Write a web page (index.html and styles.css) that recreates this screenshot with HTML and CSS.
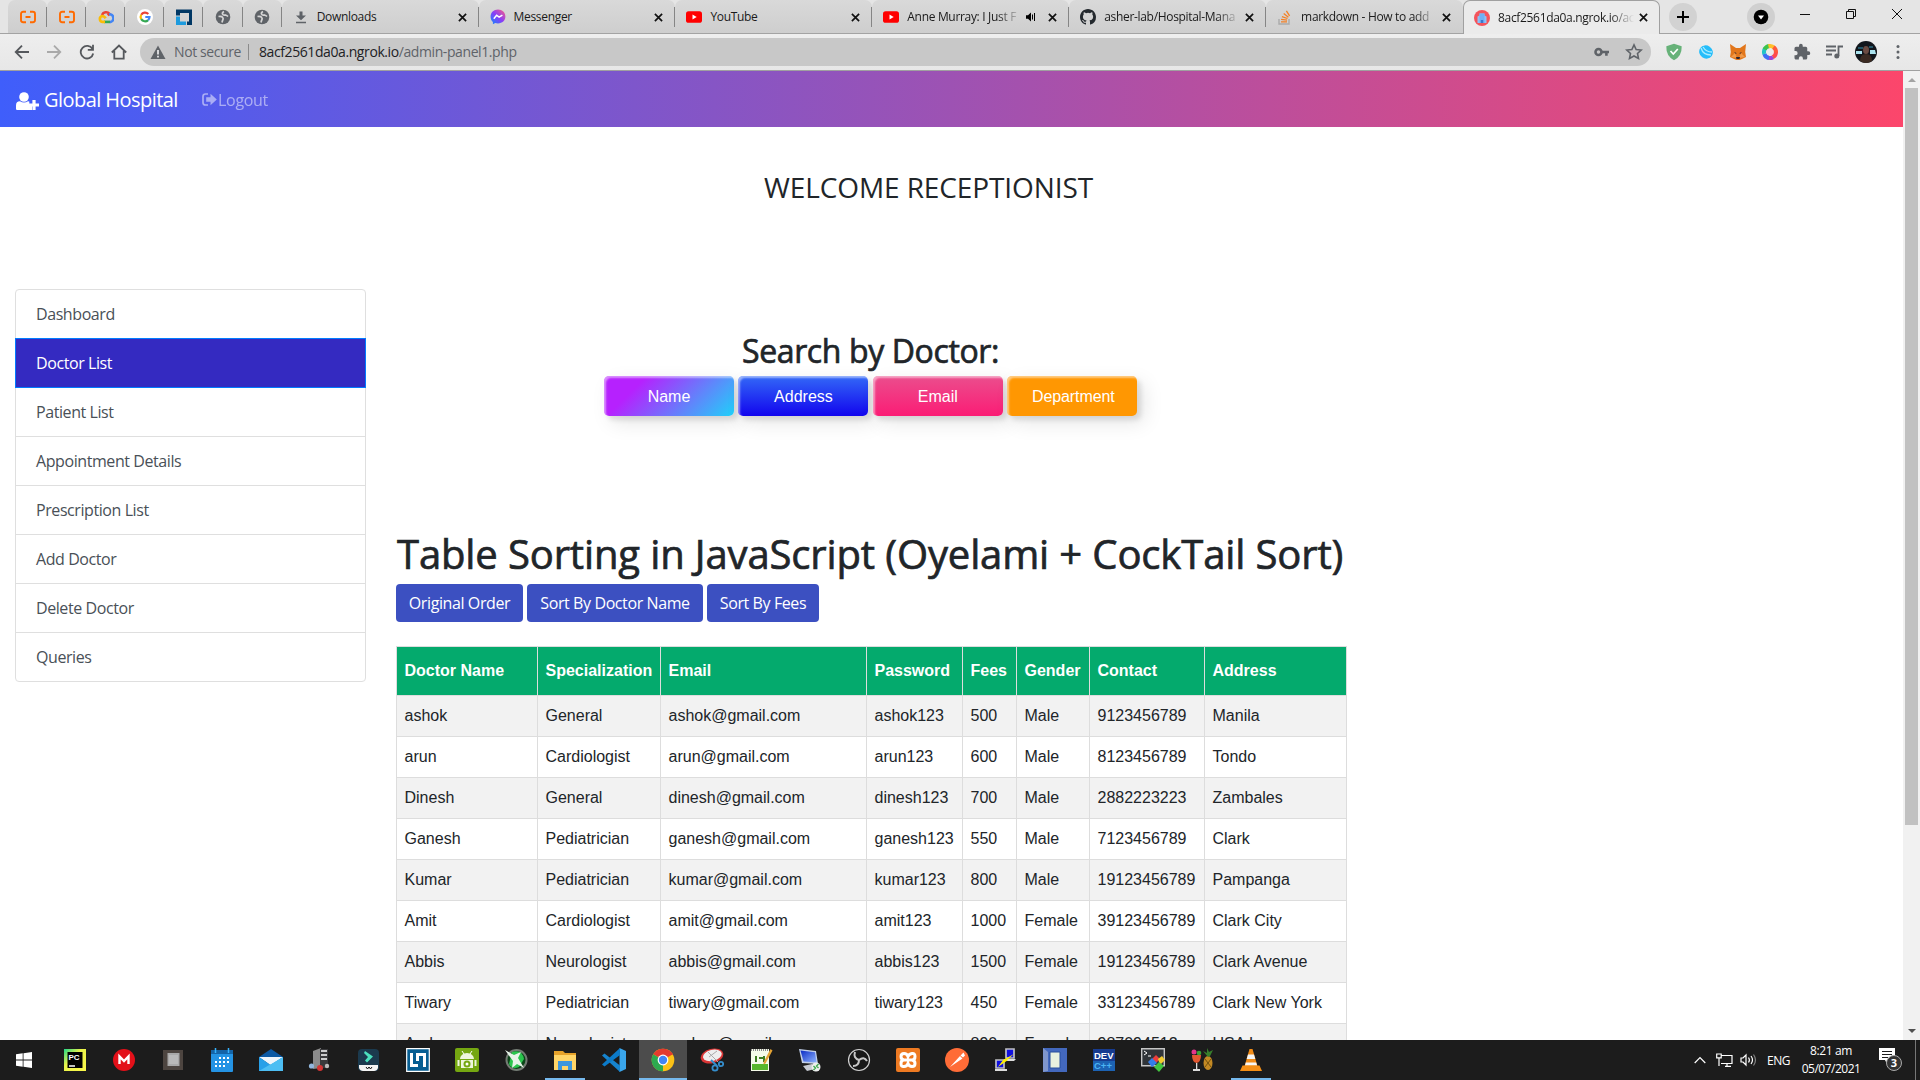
FILE: index.html
```html
<!DOCTYPE html>
<html lang="en">
<head>
<meta charset="utf-8">
<title>Global Hospital</title>
<link rel="stylesheet" href="styles.css">
</head>
<body>
<svg class="defs" aria-hidden="true">
  <defs>
    <linearGradient id="msg" x1="0" y1="1" x2="1" y2="0"><stop offset="0" stop-color="#0a8cff"/><stop offset=".5" stop-color="#8a3df7"/><stop offset="1" stop-color="#ff5f80"/></linearGradient>
    <linearGradient id="pyc" x1="0" y1="0" x2="1" y2="1"><stop offset="0" stop-color="#1fd789"/><stop offset=".4" stop-color="#e9f34a"/><stop offset="1" stop-color="#fcf84a"/></linearGradient>
    <linearGradient id="scr" x1="0" y1="0" x2="1" y2="1"><stop offset="0" stop-color="#0a2bc4"/><stop offset="1" stop-color="#8fb4ff"/></linearGradient>
  </defs>
  <symbol id="x" viewBox="0 0 10 10"><path d="M1 1l8 8M9 1L1 9" stroke="#111" stroke-width="1.9" fill="none"/></symbol>
  <symbol id="bracket" viewBox="0 0 16 16"><path d="M6 2.8H3.2Q1 2.8 1 5v6q0 2.200 2.200 2.200H6M10 2.800h2.800Q15 2.800 15 5v6q0 2.200-2.200 2.200H10M5.500 8h5" fill="none" stroke="#ff6a00" stroke-width="1.900"/></symbol>
  <symbol id="globe" viewBox="0 0 16 16"><circle cx="8" cy="8" r="7.300" fill="#5f6368"/><path d="M9 2.500q-2 1-1.500 2.500t3 1q1.500.5 2.500 1.500M3.500 7.500q3-.5 4 .8t.5 2.200-1 3" fill="none" stroke="#d5d5d5" stroke-width="1.700"/></symbol>
  <symbol id="youtube" viewBox="0 0 16 16"><rect y="2.300" width="16" height="11.500" rx="2.600" fill="#f00"/><path d="M6.500 5.600v4.900L10.700 8z" fill="#fff"/></symbol>
</svg>

<header class="browser">
  <div class="tabs">
    <div class="tab pin"><svg class="i16"><use href="#bracket"/></svg></div>
    <div class="tab pin"><svg class="i16"><use href="#bracket"/></svg></div>
    <div class="tab pin"><svg class="i16" viewBox="0 0 16 16"><path d="M4 6a4.500 4.500 0 0 1 7.500-1.200L9.800 6.400" fill="none" stroke="#ea4335" stroke-width="2.600"/><path d="M11 5.200a4 4 0 0 1 .8 8" fill="none" stroke="#4285f4" stroke-width="2.600"/><path d="M12 12.900H6" stroke="#34a853" stroke-width="2.600"/><path d="M7 12.900H4.300A3 3 0 0 1 4.300 7q2 0 3.400 2.200" fill="none" stroke="#fbbc05" stroke-width="2.600"/></svg></div>
    <div class="tab pin"><svg class="i16" viewBox="0 0 16 16"><circle cx="8" cy="8" r="8" fill="#fff"/><path d="M4.200 5.800A4.500 4.500 0 0 1 11.300 5" fill="none" stroke="#ea4335" stroke-width="2.200"/><path d="M4.200 5.800a4.500 4.500 0 0 0 0 4.400" fill="none" stroke="#fbbc05" stroke-width="2.200"/><path d="M4.200 10.200a4.500 4.500 0 0 0 6.900.9" fill="none" stroke="#34a853" stroke-width="2.200"/><path d="M11.100 11.100A4.500 4.500 0 0 0 12.500 8H8.300" fill="none" stroke="#4285f4" stroke-width="2.200"/></svg></div>
    <div class="tab pin"><svg class="i16" viewBox="0 0 16 16"><path d="M0 .5h16V16h-5v-3.500h2V4H4v2.500H0z" fill="#003764"/><path d="M0 7.500h4v5h6V16H0z" fill="#1d9bde"/></svg></div>
    <div class="tab pin"><svg class="i16"><use href="#globe"/></svg></div>
    <div class="tab pin"><svg class="i16"><use href="#globe"/></svg></div>
    <div class="tab"><svg class="i16" viewBox="0 0 16 16"><path d="M6.500 2.500h3v4H13L8 11.300 3 6.500h3.500zM3 12.800h10v1.500H3z" fill="#5f6368"/></svg><span class="label">Downloads</span><svg class="close"><use href="#x"/></svg></div>
    <div class="tab"><svg class="i16" viewBox="0 0 16 16"><path d="M8 .6C3.700.6.600 3.700.600 7.700c0 2.100.9 4 2.300 5.200v2.300l2.300-1.100c.9.200 1.800.4 2.800.4 4.300 0 7.400-3 7.400-6.900S12.300.6 8 .6z" fill="url(#msg)"/><path d="M3.800 9.700l2.800-3.500 2.500 2 3.300-2.100" fill="none" stroke="#fff" stroke-width="1.500"/></svg><span class="label">Messenger</span><svg class="close"><use href="#x"/></svg></div>
    <div class="tab"><svg class="i16"><use href="#youtube"/></svg><span class="label">YouTube</span><svg class="close"><use href="#x"/></svg></div>
    <div class="tab"><svg class="i16"><use href="#youtube"/></svg><span class="label fade">Anne Murray: I Just F</span><svg class="sound" viewBox="0 0 10 10"><path d="M0 3.300h2L5 .5v9L2 6.700H0z"/><path d="M6.500 2.500v5M8.500 1v8" stroke="#000" stroke-width="1"/></svg><svg class="close"><use href="#x"/></svg></div>
    <div class="tab"><svg class="i16" viewBox="0 0 16 16"><path fill="#24292e" d="M8 0C3.580 0 0 3.580 0 8c0 3.540 2.290 6.530 5.470 7.590.4.070.55-.17.55-.38 0-.19-.01-.82-.01-1.490-2.010.37-2.530-.49-2.690-.94-.09-.23-.48-.94-.82-1.130-.28-.15-.68-.52-.01-.53.63-.01 1.080.58 1.230.82.72 1.210 1.870.87 2.330.66.07-.52.28-.87.51-1.070-1.780-.2-3.640-.89-3.640-3.950 0-.87.310-1.590.82-2.150-.08-.2-.36-1.020.08-2.120 0 0 .67-.21 2.200.82a7.600 7.600 0 0 1 4 0c1.530-1.040 2.200-.82 2.200-.82.44 1.100.16 1.920.08 2.120.51.56.82 1.270.82 2.150 0 3.070-1.870 3.750-3.650 3.950.29.25.54.73.54 1.480 0 1.070-.01 1.930-.01 2.200 0 .21.15.46.55.38A8 8 0 0 0 16 8c0-4.420-3.580-8-8-8z"/></svg><span class="label fade">asher-lab/Hospital-Mana</span><svg class="close"><use href="#x"/></svg></div>
    <div class="tab last"><svg class="i16" viewBox="0 0 16 16"><path d="M2 10v5h10v-5" fill="none" stroke="#aaa" stroke-width="1.400"/><path d="M4 12.800h6M4.100 10.400l6 .7M4.900 7.600l5.600 1.900M6.700 4.600l4.700 3.700M9.400 1.800l3.200 5" stroke="#f48024" stroke-width="1.300"/></svg><span class="label fade">markdown - How to add</span><svg class="close"><use href="#x"/></svg></div>
    <div class="tab active"><svg class="i16" viewBox="0 0 16 16"><circle cx="8" cy="8" r="8" fill="#f4545c"/><path d="M3.500 6.500l2-1V3.500h5v2l2 1V13h-9z" fill="#8fc1f5"/><path d="M5.500 3.500h5V13h-5z" fill="#6fb0f5"/><path d="M6.800 10h2.400v3H6.800z" fill="#3c77cc"/></svg><span class="label fade">8acf2561da0a.ngrok.io/ac</span><svg class="close"><use href="#x"/></svg></div>
    <div class="newtab"><svg viewBox="0 0 12 12"><path d="M6 0v12M0 6h12" stroke="#000" stroke-width="2"/></svg></div>
    <div class="windowctl">
      <div class="round"><svg viewBox="0 0 16 16"><circle cx="8" cy="8" r="7.300"/><path d="M5 6.500h6L8 10.500z" fill="#fff"/></svg></div>
      <svg class="wc" viewBox="0 0 12 12"><path d="M1 6.500h10"/></svg>
      <svg class="wc" viewBox="0 0 12 12"><path d="M1.500 3.500h7v7h-7zM3.500 3.500v-2h7v7h-2"/></svg>
      <svg class="wc" viewBox="0 0 12 12"><path d="M1 1l10 10M11 1L1 11"/></svg>
    </div>
  </div>
  <div class="toolbar">
    <div class="navbtns">
      <svg viewBox="0 0 16 16"><path d="M15 8H2M8 1.700L1.700 8 8 14.300"/></svg>
      <svg class="dim" viewBox="0 0 16 16"><path d="M1 8h13M8 1.700L14.300 8 8 14.300"/></svg>
      <svg viewBox="0 0 16 16"><path d="M13.500 5A6.300 6.300 0 1 0 14.200 9.500M14 .8v5.100H8.800"/></svg>
      <svg viewBox="0 0 16 16"><path d="M.8 8.500L8 1.500l7.200 7M3.300 7v7.700h9.400V7"/></svg>
    </div>
    <div class="omnibox">
      <svg class="warn" viewBox="0 0 16 14"><path d="M8 .5L15.500 14H.5z" fill="#5f6368"/><path d="M8 5v4.500M8 10.800v1.700" stroke="#fff" stroke-width="1.500"/></svg>
      <span class="insecure">Not secure</span><span class="bar"></span>
      <span class="url">8acf2561da0a.ngrok.io<span class="path">/admin-panel1.php</span></span>
      <svg class="key" viewBox="0 0 16 10"><circle cx="4.500" cy="5" r="3" fill="none" stroke="#5f6368" stroke-width="2.600"/><path d="M8 3.700h7v2.600h-1.300v2.500h-2.600V6.300H8z" fill="#5f6368"/></svg>
      <svg class="star" viewBox="0 0 16 16"><path d="M8 1.700l1.900 4.100 4.500.5-3.300 3 .9 4.400L8 11.500l-4 2.200.9-4.400-3.300-3 4.500-.5z" fill="none" stroke="#5f6368" stroke-width="1.400"/></svg>
    </div>
    <div class="exts">
      <svg viewBox="0 0 18 18"><path d="M9 .8l7.700 2.400q.3 10-7.700 14Q1 13 1.300 3.200z" fill="#67b279"/><path d="M5.500 8l2.800 3 4.500-5" fill="none" stroke="#fff" stroke-width="1.700"/></svg>
      <svg viewBox="0 0 18 18"><ellipse cx="9" cy="9" rx="7" ry="6.500" fill="#25bdfa" transform="rotate(35 9 9)"/><path d="M4 5q2 7 10 7M6 4q3 5 9 5" fill="none" stroke="#a8ecff" stroke-width="1.300"/></svg>
      <svg viewBox="0 0 18 18"><path d="M1 1l6 4h4l6-4-.8 8 .8 5-4 2-2.500 1h-3L5 16l-4-2 .8-5z" fill="#e2761b"/><path d="M2 14l4-4 2 5zM16 14l-4-4-2 5z" fill="#f09a4a"/><path d="M5 9l2.500 1-.5 1zM13 9l-2.500 1 .5 1zM7 14h4l-.5 2h-3z" fill="#2a2430"/></svg>
      <svg viewBox="0 0 18 18"><g fill="none" stroke-width="4" stroke-dasharray="6.280 31.420"><circle cx="9" cy="9" r="6" stroke="#ff4b4b"/><circle cx="9" cy="9" r="6" stroke="#9b45d8" transform="rotate(60 9 9)"/><circle cx="9" cy="9" r="6" stroke="#3d6ef5" transform="rotate(100 9 9)"/><circle cx="9" cy="9" r="6" stroke="#22c3c6" transform="rotate(160 9 9)"/><circle cx="9" cy="9" r="6" stroke="#3ec44b" transform="rotate(205 9 9)"/><circle cx="9" cy="9" r="6" stroke="#ffc02b" transform="rotate(255 9 9)"/><circle cx="9" cy="9" r="6" stroke="#ff5a3c" transform="rotate(305 9 9)"/></g></svg>
      <svg viewBox="0 0 24 24"><path d="M20.500 11H19V7a2 2 0 0 0-2-2h-4V3.500a2.500 2.500 0 0 0-5 0V5H4a2 2 0 0 0-2 2v3.800h1.500a2.700 2.700 0 0 1 0 5.400H2V20c0 1.100.9 2 2 2h3.800v-1.500a2.700 2.700 0 0 1 5.400 0V22H17a2 2 0 0 0 2-2v-4h1.500a2.500 2.500 0 0 0 0-5z" fill="#5f6368"/></svg>
      <svg viewBox="0 0 18 18"><path d="M1 3.500h10M1 7.500h10M1 11.500h6M13.500 13V3.500H18" fill="none" stroke="#5f6368" stroke-width="1.800"/><circle cx="11.800" cy="13" r="2.500" fill="#5f6368"/></svg>
      <svg class="avatar" viewBox="0 0 22 22"><circle cx="11" cy="11" r="11" fill="#11161c"/><path d="M1 10h6v3H1zM15 9h5l1 4h-6z" fill="#a9e2ee"/><path d="M3 6h5v2H3zM14 5h4v2h-4z" fill="#235668"/><ellipse cx="11" cy="9" rx="3" ry="4" fill="#6b4b42"/><path d="M5 20q0-7 6-7t6 7q-6 4-12 0z" fill="#3b2a22"/></svg>
      <svg viewBox="0 0 18 18"><g fill="#5f6368"><circle cx="9" cy="3.500" r="1.500"/><circle cx="9" cy="9" r="1.500"/><circle cx="9" cy="14.500" r="1.500"/></g></svg>
    </div>
  </div>
</header>

<div class="viewport">
  <main class="page">
    <nav class="navbar">
      <svg class="userplus" viewBox="0 0 23 18"><circle cx="8" cy="5" r="4.800" fill="#fff"/><path d="M0 17v-3.500Q0 9.300 4 9.300q4 2.500 8 0l1.300.3V14H16v4H1.200Q0 18 0 17z" fill="#fff"/><path d="M18 8v10M13 13h10" stroke="#fff" stroke-width="3.200"/></svg>
      <span class="brand">Global Hospital</span>
      <svg class="exit" viewBox="0 0 15 13"><path d="M6 1H3.500Q1 1 1 3.500v6Q1 12 3.500 12H6" fill="none" stroke="#fff" stroke-width="1.700"/><path d="M4.200 4.300h4.300V.8L14.800 6.500 8.500 12.200V8.700H4.200z" fill="#fff"/></svg>
      <span class="logout">Logout</span>
    </nav>
    <h3 class="welcome">WELCOME RECEPTIONIST</h3>
    <div class="columns">
      <ul class="menu">
        <li>Dashboard</li><li class="on">Doctor List</li><li>Patient List</li><li>Appointment Details</li><li>Prescription List</li><li>Add Doctor</li><li>Delete Doctor</li><li>Queries</li>
      </ul>
      <section class="content">
        <div class="search">
          <h2>Search by Doctor:</h2>
          <div class="glossy"><button class="g1">Name</button><button class="g2">Address</button><button class="g3">Email</button><button class="g4">Department</button></div>
        </div>
        <h1>Table Sorting in JavaScript (Oyelami + CockTail Sort)</h1>
        <div class="sorts"><button class="s1">Original Order</button><button class="s2">Sort By Doctor Name</button><button class="s3">Sort By Fees</button></div>
        <table>
          <colgroup><col class="c1"><col class="c2"><col class="c3"><col class="c4"><col class="c5"><col class="c6"><col class="c7"><col class="c8"></colgroup>
          <thead><tr><th>Doctor Name</th><th>Specialization</th><th>Email</th><th>Password</th><th>Fees</th><th>Gender</th><th>Contact</th><th>Address</th></tr></thead>
          <tbody>
            <tr><td>ashok</td><td>General</td><td>ashok@gmail.com</td><td>ashok123</td><td>500</td><td>Male</td><td>9123456789</td><td>Manila</td></tr>
            <tr><td>arun</td><td>Cardiologist</td><td>arun@gmail.com</td><td>arun123</td><td>600</td><td>Male</td><td>8123456789</td><td>Tondo</td></tr>
            <tr><td>Dinesh</td><td>General</td><td>dinesh@gmail.com</td><td>dinesh123</td><td>700</td><td>Male</td><td>2882223223</td><td>Zambales</td></tr>
            <tr><td>Ganesh</td><td>Pediatrician</td><td>ganesh@gmail.com</td><td>ganesh123</td><td>550</td><td>Male</td><td>7123456789</td><td>Clark</td></tr>
            <tr><td>Kumar</td><td>Pediatrician</td><td>kumar@gmail.com</td><td>kumar123</td><td>800</td><td>Male</td><td>19123456789</td><td>Pampanga</td></tr>
            <tr><td>Amit</td><td>Cardiologist</td><td>amit@gmail.com</td><td>amit123</td><td>1000</td><td>Female</td><td>39123456789</td><td>Clark City</td></tr>
            <tr><td>Abbis</td><td>Neurologist</td><td>abbis@gmail.com</td><td>abbis123</td><td>1500</td><td>Female</td><td>19123456789</td><td>Clark Avenue</td></tr>
            <tr><td>Tiwary</td><td>Pediatrician</td><td>tiwary@gmail.com</td><td>tiwary123</td><td>450</td><td>Female</td><td>33123456789</td><td>Clark New York</td></tr>
            <tr><td>Audrey</td><td>Neurologist</td><td>audrey@gmail.com</td><td>aurora</td><td>890</td><td>Female</td><td>987094512</td><td>USA Lane</td></tr>
          </tbody>
        </table>
      </section>
    </div>
  </main>
  <div class="scrollbar"><i class="up"></i><i class="thumb"></i><i class="down"></i></div>
</div>

<footer class="taskbar">
  <div class="app start"><svg viewBox="0 0 16 16"><path d="M0 2.300L6.700 1.300v6.300H0zM7.500 1.200L16 0v7.600H7.500zM0 8.400h6.700v6.300L0 13.700zM7.500 8.400H16V16l-8.500-1.200z" fill="#fff"/></svg></div>
  <div class="app"><svg viewBox="0 0 24 24"><path d="M1 1h22v22H1z" fill="url(#pyc)"/><path d="M4.500 4h15v16h-15z"/><path d="M6 18h6" stroke="#fff" stroke-width="1.500"/><text x="5.500" y="12" class="t8">PC</text></svg></div>
  <div class="app"><svg viewBox="0 0 24 24"><circle cx="12" cy="12" r="11" fill="#e31019"/><path d="M7.500 16V8.500L12 13l4.500-4.500V16" fill="none" stroke="#fff" stroke-width="2.400"/></svg></div>
  <div class="app"><svg viewBox="0 0 24 24"><path d="M2 2h20v20H2z" fill="#4d4540"/><path d="M6.500 5h12v13h-12z" fill="#a9a9a9"/><path d="M8 7h9v9H8z" fill="#b9b9b9"/></svg></div>
  <div class="app"><svg viewBox="0 0 24 24"><path d="M1 2h22v21q0 1-1 1H2q-1 0-1-1z" fill="#2493e4"/><path d="M1 2h22v4H1z" fill="#1464a8"/><path d="M5.500 0v5M18.500 0v5" stroke="#35b2ff" stroke-width="1.500"/><path d="M9 10h10M5 14h14M5 18h10" stroke="#fff" stroke-width="2" stroke-dasharray="2 2"/></svg></div>
  <div class="app"><svg viewBox="0 0 24 24"><path d="M0 9l12-8 12 8v4H0z" fill="#0c59a4"/><path d="M0 9h24L12 17z" fill="#f0f6fc"/><path d="M0 9l12 8L24 9v14H0z" fill="#28a0e8"/><path d="M0 23L24 9v14z" fill="#4dbef3"/><path d="M1 9h22L11 16.500z" fill="#f0f6fc"/></svg></div>
  <div class="app"><svg viewBox="0 0 24 24"><path d="M5 3l8-3v20l-8 1z" fill="#8b8b8b"/><path d="M12 1h8v19h-8z" fill="#39393b"/><path d="M13 3h6M13 7h6M13 11h6" stroke="#ccc" stroke-width="2"/><circle cx="3.500" cy="18" r="2.600" fill="#91b6dd"/><circle cx="12" cy="20" r="3" fill="#d33434"/><circle cx="19" cy="18" r="2.200" fill="#bbb"/></svg></div>
  <div class="app"><svg viewBox="0 0 24 24"><rect x="1" y="1" width="21" height="22" rx="4" fill="#1b3a4e"/><path d="M8 3l8 5.500-6 6-2-2L11 9 7 5z" fill="#4be0bd"/><path d="M2 17h19v3q-1 3-4 3H6q-3 0-4-3z" fill="#f4f4f4"/><path d="M9 19l1.500 2 1.500-2 1.500 2 1.500-2" fill="none" stroke="#111"/></svg></div>
  <div class="app"><svg viewBox="0 0 24 24"><path d="M.7.700h22.600v22.600H.7z" fill="#075e92" stroke="#fff" stroke-width="1.200"/><path d="M4 5h3v11h5v3H4zM10 5h10v14h-3V8h-4v5h-3z" fill="#fff"/></svg></div>
  <div class="app"><svg viewBox="0 0 24 24"><rect width="24" height="24" rx="2" fill="#75a711"/><path d="M5 11a7 6 0 0 1 14 0zM2.500 12h2v6h-2zM19.500 12h2v6h-2zM6 12h12v8H6z" fill="#eef5dd"/><path d="M7 3l2 3M17 3l-2 3" stroke="#fff"/><circle cx="12" cy="16" r="3.500" fill="#75a711"/><circle cx="12" cy="16" r="1.500" fill="#fff"/></svg></div>
  <div class="app"><svg viewBox="0 0 24 24"><circle cx="12.500" cy="12" r="11" fill="#737b73"/><circle cx="12.500" cy="12" r="9" fill="#0c4419"/><path d="M8 4q10-3 12 7l-5 8q-7 3-10-3z" fill="#2bc54d"/><path d="M1 2l9 5 7-3-3 6 6 10-7-4-5 4 1-7z" fill="#e7f4e8"/></svg></div>
  <div class="app open"><svg viewBox="0 0 24 24"><path d="M1 3h9l2 2h11v17H1z" fill="#e6a22a"/><path d="M1 7h22v15H1z" fill="#ffd568"/><path d="M5 13h14v9h-4v-4H9v4H5z" fill="#3d96dd"/></svg></div>
  <div class="app"><svg viewBox="0 0 24 24"><path d="M17.500 0L24 3v18l-6.500 3z" fill="#3aa6ec"/><path d="M0 7.500l2.500-2L18 17.500V24z" fill="#1684ce"/><path d="M0 16.500l2.500 2L18 7V0z" fill="#0c7bc9"/></svg></div>
  <div class="app current"><svg viewBox="0 0 24 24"><circle cx="12" cy="12" r="11.300" fill="#fbc116"/><path d="M12 12L2.200 6.300a11.300 11.300 0 0 1 19.600 0z" fill="#e33b2e"/><path d="M2.200 6.300L12 12l0 11.300A11.300 11.300 0 0 1 2.200 6.300z" fill="#2da94f"/><path d="M12 6.500h9.900l-1-1.800L12 1z" fill="#e33b2e"/><circle cx="12" cy="12" r="5.400" fill="#fff"/><circle cx="12" cy="12" r="4.200" fill="#4285f4"/></svg></div>
  <div class="app"><svg viewBox="0 0 24 24"><ellipse cx="12" cy="8" rx="11.500" ry="7.200" fill="#d93636" transform="rotate(-14 12 8)"/><ellipse cx="12.500" cy="7.500" rx="9.500" ry="5.600" fill="#eee" transform="rotate(-14 12 8)"/><path d="M8 4l10 10M17 3L9 9" stroke="#aaa"/><circle cx="15" cy="20" r="2.600" fill="none" stroke="#348dcb" stroke-width="1.800"/><circle cx="21" cy="16" r="2.200" fill="none" stroke="#348dcb" stroke-width="1.800"/><path d="M11 12l6 6" stroke="#348dcb" stroke-width="2"/></svg></div>
  <div class="app"><svg viewBox="0 0 24 24"><path d="M2 1h18v22H2z" fill="#f5fbe9"/><path d="M2 2h18" stroke="#888" stroke-width="2" stroke-dasharray="1 1"/><path d="M3 16h16v6H3z" fill="#58b72d"/><path d="M7 14V8M10 10h4M15 14V8" stroke="#3e7e21" stroke-width="2"/><path d="M21.500 1l2 1.500-7 13-2 1 .2-2.500z" fill="#e4a334"/></svg></div>
  <div class="app"><svg viewBox="0 0 24 24"><path d="M1 1l17 2 2 13-16-1z" fill="#c1cfe8"/><path d="M2.500 2.500l14.500 1.800 1.500 10.200-13-1z" fill="url(#scr)"/><path d="M5 18l9-2 3 5-8 2z" fill="#c7cbd2"/><circle cx="18" cy="19" r="4.500" fill="#eee"/><path d="M15.500 18l2 2-2 2M20.500 16l-2 2 2 2" fill="none" stroke="#37a848" stroke-width="1.300"/></svg></div>
  <div class="app"><svg viewBox="0 0 24 24"><circle cx="12" cy="12" r="10.500" fill="#181818" stroke="#d0d0d0" stroke-width="1.200"/><path d="M12 12Q6 10 8 4M12 12q5-4 8 1M12 12q0 6-6 6" fill="none" stroke="#c8c8c8" stroke-width="2"/></svg></div>
  <div class="app"><svg viewBox="0 0 24 24"><rect width="24" height="24" rx="2" fill="#ee7a22"/><path d="M8 5.500q-3 0-3 3T8 12q-3 0-3 3.500t3 3q3 0 4-3 1 3 4 3t3-3-3-3.500q3 0 3-3.500t-3-3-4 3q-1-3-4-3zM8 12h8" fill="none" stroke="#fff" stroke-width="3"/></svg></div>
  <div class="app"><svg viewBox="0 0 24 24"><circle cx="12" cy="12" r="12" fill="#ff6c37"/><path d="M5 19l10-11 2.500 2.500zM15.500 7.500l3-3 1.500 3-2 2" fill="#fff"/></svg></div>
  <div class="app"><svg viewBox="0 0 24 24"><path d="M12 1h8v9h-8zM2 12h8v8H2z" fill="#1010e0" stroke="#bfc0c4" stroke-width="1.700"/><path d="M10 11h12l-2 2h-9zM1 21h12v2H1z" fill="#ddd"/><path d="M20 6L9 12h5L4 19l5-7h4z" fill="#fff100"/></svg></div>
  <div class="app"><svg viewBox="0 0 24 24"><path d="M0 0h24v24H0z" fill="#4368bd"/><path d="M0 0l5 4v19l-5 1z" fill="#7f96cc"/><path d="M7 4h10v16H7z" fill="#e9f1df" stroke="#284e9d"/></svg></div>
  <div class="app"><svg viewBox="0 0 24 24"><path d="M1 1h22v22H1z" fill="#173b8f"/><path d="M1 13h22v10H1z" fill="#1c62b3"/><text x="2" y="11" class="t9">DEV</text><text x="2" y="21" class="t9 blue">C++</text></svg></div>
  <div class="app"><svg viewBox="0 0 24 24"><path d="M.7.700h22.600v17H.7z" fill="#303438" stroke="#c6c6c6" stroke-width="1.400"/><path d="M3 3l3 2-3 2M7 8h3" fill="none" stroke="#fff"/><path d="M11 11l4-4 4 4-4 4z" fill="#eb3d3d"/><path d="M7 14l4-4 5 5-5 4z" fill="#337ce9"/><path d="M17 11l4-3 3 4-5 5z" fill="#f0c92e"/><path d="M13 19l5-5 5 4-5 6z" fill="#42c43f"/></svg></div>
  <div class="app"><svg viewBox="0 0 24 24"><path d="M2 7h9q0 7-4.500 8Q2 14 2 7z" fill="#e35831"/><path d="M6 15h1.300v6H10v2H3v-2h3z" fill="#ddd"/><circle cx="4" cy="4" r="2.500" fill="#e4358a"/><circle cx="9" cy="5" r="2.300" fill="#39a436"/><ellipse cx="18" cy="15" rx="4.500" ry="7" fill="#c48a24"/><path d="M18 9L13 3l4 2V0l2 4 4-2-3 6z" fill="#38802c"/><path d="M15 11l6 8M21 11l-6 8" stroke="#75520e"/></svg></div>
  <div class="app open"><svg viewBox="0 0 24 24"><path d="M10.500 1h3L19 20H5z" fill="#f28c17"/><path d="M9 6.500h6L16.300 11H7.700zM6.800 14.500h10.400l.9 3H5.900z" fill="#f6f6f6"/><path d="M3.500 17.500h17L23 23H1z" fill="#f58f16"/></svg></div>
  <div class="tray">
    <svg class="chev" viewBox="0 0 12 8"><path d="M.7 7L6 1.500 11.300 7"/></svg>
    <svg class="net" viewBox="0 0 17 14"><path d="M5 2.500h11v8H5M3 5v8M9 13.300h6M11 10.500v3M.7 1h4.500v3.800H.7z"/></svg>
    <svg class="vol" viewBox="0 0 17 14"><path d="M1 5h2l3-3v10L3 9H1zM8.500 4.500q1.800 2.500 0 5M11 3q3 4 0 8"/><path d="M13.500 1.500q4 5.500 0 11" opacity=".45"/></svg>
    <span class="lang">ENG</span>
    <div class="clock"><span>8:21 am</span><span class="date">05/07/2021</span></div>
    <div class="note"><svg viewBox="0 0 16 16"><path d="M0 0h16v12h-5l-3 4-2-4H0z" fill="#fff"/><path d="M3 3.500h10M3 6.500h10M3 9.500h6" stroke="#1c1c1c"/></svg><b>3</b></div>
    <i class="desk"></i>
  </div>
</footer>
</body>
</html>
```
FILE: styles.css
```css
* { box-sizing: border-box; }
html, body { margin: 0; height: 1080px; overflow: hidden; }
body { display: flex; flex-direction: column; background: #fff; font-family: "Open Sans", "Noto Sans", sans-serif; color: #212529; }
svg { display: block; flex: none; }
button { border: 0; margin: 0; padding: 0; color: #fff; font: inherit; white-space: nowrap; }
.defs { position: absolute; width: 0; height: 0; }

/* browser window */
.browser { height: 71px; flex: none; background: #ebebeb; border-bottom: 1px solid #a0a0a0; }
.tabs { display: flex; height: 34px; background: #e5e5e5; padding-left: 8px; border-bottom: 1px solid #a3a3a3; }
.tab { width: 196.900px; height: 33px; flex: none; display: flex; align-items: center; padding: 1px 11px 0; background: linear-gradient(#d9d9d9, #cecece); border-radius: 7px 7px 0 0; position: relative; font-size: 12px; color: #1a1a1a; }
.tab::after { content: ""; position: absolute; right: 0; top: 7px; width: 1px; height: 20px; background: #858585; }
.tab.pin { width: 39.1px; padding: 1px 0 0; justify-content: center; }
.tab.last::after, .tab.active::after { display: none; }
.tab.active { height: 34px; background: #ebebeb; border: 1px solid #a0a0a0; border-bottom: 0; padding: 0 10px; }
.i16 { width: 16px; height: 16px; }
.label { flex: 1; width: 0; margin: 0 5px 0 8px; white-space: nowrap; overflow: hidden; letter-spacing: -.32px; line-height: 18px; }
.fade { -webkit-mask-image: linear-gradient(90deg, #000 calc(100% - 24px), transparent); mask-image: linear-gradient(90deg, #000 calc(100% - 24px), transparent); }
.close { width: 9px; height: 9px; margin-right: 1px; }
.sound { width: 10px; height: 10px; margin-right: 12px; }
.newtab { width: 28px; height: 28px; border-radius: 50%; background: #d2d2d2; margin: 3px 0 0 9px; display: grid; place-items: center; }
.newtab svg { width: 12px; height: 12px; }
.windowctl { display: flex; margin-left: auto; align-items: flex-start; padding-right: 17px; }
.round { width: 28px; height: 28px; margin: 3px 24px 0 0; border-radius: 50%; background: #d0d0d0; display: grid; place-items: center; }
.round svg { width: 16px; height: 16px; }
.wc { width: 12px; height: 12px; margin: 8px 0 0 34px; fill: none; stroke: #111; stroke-width: 1; }
.round + .wc { margin-left: 0; }
.toolbar { display: flex; align-items: center; height: 36px; padding-left: 14px; background: linear-gradient(#eee, #e7e7e7); }
.navbtns { display: flex; gap: 16.300px; width: 126px; }
.navbtns svg { width: 16px; height: 16px; fill: none; stroke: #55585c; stroke-width: 1.800; }
.navbtns .dim { stroke: #a9a9a9; }
.omnibox { width: 1511px; height: 28px; border-radius: 14px; background: #c8c8c8; display: flex; align-items: center; padding: 0 10px; font-size: 14px; line-height: 20px; letter-spacing: -.41px; }
.warn { width: 16px; height: 14px; }
.insecure { width: 74px; margin-left: 8px; color: #5f6368; letter-spacing: -.4px; white-space: nowrap; }
.bar { width: 1px; height: 16px; background: #8b8b8b; margin-right: 10px; }
.url { color: #202124; flex: 1; }
.path { color: #5f6368; }
.key { width: 16px; height: 10px; margin-right: 15px; }
.star { width: 18px; height: 18px; margin-right: -2px; }
.exts { display: flex; align-items: center; margin-left: 14px; gap: 14px; }
.exts svg { width: 18px; height: 18px; }
.exts .avatar { width: 22px; height: 22px; margin: 0 -2px; }

/* page */
.viewport { display: flex; height: 969px; flex: none; overflow: hidden; }
.page { width: 1903px; flex: none; }
.navbar { height: 56px; display: flex; align-items: center; padding: 1px 0 0 16px; background: linear-gradient(90deg, #3f5efb, #fc466b); color: #fff; }
.userplus { width: 23px; height: 18px; margin-top: 2px; }
.brand { width: 158px; margin-left: 5px; font-size: 20px; letter-spacing: -.55px; white-space: nowrap; }
.exit { width: 15px; height: 13px; opacity: .5; }
.logout { margin-left: 1px; font-size: 16px; letter-spacing: -.3px; opacity: .5; }
.welcome { margin: 42px 0 0 764px; height: 120px; font-size: 28px; line-height: 36px; font-weight: 400; letter-spacing: -.1px; white-space: nowrap; }
.columns { display: flex; padding-left: 15px; gap: 30px; }
.menu { list-style: none; width: 351px; margin: 0; padding: 0; align-self: flex-start; }
.menu li { height: 50px; margin-bottom: -1px; border: 1px solid #dfdfdf; padding: 12px 20px; font-size: 16px; line-height: 24px; color: #495057; letter-spacing: -.42px; }
.menu li:first-child { border-radius: 4px 4px 0 0; }
.menu li:last-child { border-radius: 0 0 4px 4px; }
.menu .on { background: #342ac1; border-color: #007bff; color: #fff; position: relative; }
.content { width: 951px; padding-top: 41px; }
.search { width: 534px; margin-left: 208px; }
h1, h2 { margin: 0; font-weight: 400; white-space: nowrap; -webkit-text-stroke: .7px #212529; }
h2 { font-size: 32px; height: 46px; line-height: 38px; padding: 2px 0 0 138px; letter-spacing: -.38px; }
.glossy { display: flex; gap: 4.450px; }
.glossy button { width: 130px; height: 40px; padding-top: 2px; border-radius: 5px; font: 16px "Liberation Sans", Arial, sans-serif; box-shadow: inset 2px 2px 2px rgba(255,255,255,.5), 7px 7px 20px rgba(0,0,0,.1), 4px 4px 5px rgba(0,0,0,.1); }
.g1 { background: linear-gradient(135deg, #b621fe 25%, #1fd1f9); }
.g2 { background: linear-gradient(#3369f7, #1205ee); }
.g3 { background: linear-gradient(#eb4e8d, #fb1c75); }
.g4 { background: #ff9702; }
.glossy .g4 { padding-left: 2px; letter-spacing: -.1px; }
h1 { margin-top: 112px; height: 56px; padding: 2px 0 0 1px; font-size: 40px; line-height: 48px; letter-spacing: -.13px; }
.sorts { display: flex; gap: 4px; }
.sorts button { height: 38px; border-radius: 4px; background: #3c50c1; font-size: 16px; line-height: 24px; letter-spacing: -.4px; }
.s1 { width: 127px; }
.s2 { width: 176px; }
.s3 { width: 112px; }
table { width: 950px; margin-top: 24px; border-collapse: collapse; table-layout: fixed; font: 16px/24px "Liberation Sans", Arial, sans-serif; }
th, td { border: 1px solid #ddd; padding: 8px 7.500px; text-align: left; white-space: nowrap; height: 41px; }
th { background: #04aa6d; color: #fff; height: 49px; }
tbody tr:nth-child(odd) { background: #f2f2f2; }
.c1 { width: 141px; } .c2 { width: 123px; } .c3 { width: 206px; } .c4 { width: 96px; }
.c5 { width: 54px; } .c6 { width: 73px; } .c7 { width: 115px; } .c8 { width: 142px; }
.scrollbar { width: 17px; background: #f1f1f1; display: flex; flex-direction: column; align-items: center; }
.up, .down { border: 4px solid transparent; width: 0; height: 0; }
.up { border-bottom-color: #a3a3a3; margin-top: 3px; }
.thumb { width: 13px; height: 737px; margin-top: 6px; background: #c1c1c1; }
.down { border-top-color: #505050; margin: auto 0 3px; }

/* taskbar */
.taskbar { height: 40px; flex: none; display: flex; background: #1c1c1c; color: #fff; gap: 1px; }
.app { width: 48px; height: 40px; display: grid; place-items: center; position: relative; }
.app svg { width: 24px; height: 24px; }
.start { margin-right: 2px; }
.start svg { width: 16px; height: 16px; }
.open::after, .current::after { content: ""; position: absolute; left: 4px; right: 4px; bottom: 0; height: 2px; background: #76b9ed; }
.current { background: #4c4c4c; }
.current::after { left: 0; right: 0; }
.t8, .t9 { font: bold 8px "Liberation Sans", sans-serif; fill: #fff; }
.t9 { font-size: 9.500px; }
.blue { fill: #4ab4f4; }
.tray { margin-left: auto; display: flex; align-items: center; height: 40px; font-size: 12px; }
.tray svg { fill: none; stroke: #fff; stroke-width: 1.200; }
.chev { width: 12px; height: 8px; margin-right: 10px; }
.net { width: 17px; height: 14px; margin-right: 7px; }
.vol { width: 17px; height: 14px; margin-right: 10px; }
.lang { width: 23px; letter-spacing: -.5px; }
.clock { width: 58px; margin-left: 12px; display: flex; flex-direction: column; align-items: center; line-height: 18px; letter-spacing: -.35px; }
.date { letter-spacing: -.5px; }
.note { margin-left: 19px; width: 24px; height: 24px; position: relative; }
.tray .note svg { width: 16px; height: 16px; stroke: none; }
.note b { position: absolute; left: 7px; top: 7px; width: 16px; height: 16px; border: 1px solid #aaa; border-radius: 50%; background: #333; font-size: 11px; line-height: 14px; text-align: center; }
.desk { width: 1px; height: 40px; background: #777; margin: 0 4px 0 12px; }
```
